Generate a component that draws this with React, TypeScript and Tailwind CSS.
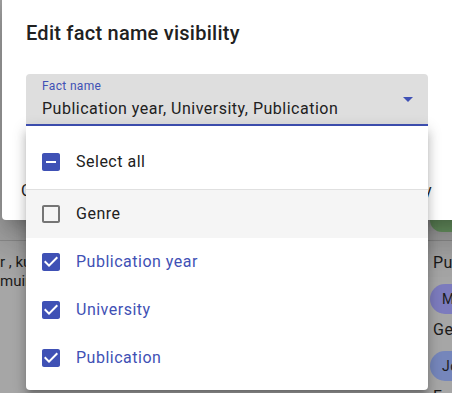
import React from "react";

const BOX_CHECKED =
  "M19 3H5c-1.11 0-2 .9-2 2v14c0 1.1.89 2 2 2h14c1.11 0 2-.9 2-2V5c0-1.1-.89-2-2-2zm-9 14l-5-5 1.41-1.41L10 14.17l7.59-7.59L19 8l-9 9z";
const BOX_BLANK =
  "M19 5v14H5V5h14m0-2H5c-1.1 0-2 .9-2 2v14c0 1.1.9 2 2 2h14c1.1 0 2-.9 2-2V5c0-1.1-.9-2-2-2z";
const BOX_PARTIAL =
  "M19 3H5c-1.1 0-2 .9-2 2v14c0 1.1.9 2 2 2h14c1.1 0 2-.9 2-2V5c0-1.1-.9-2-2-2zm-2 10H7v-2h10v2z";

type BoxState = "checked" | "blank" | "partial";

const CheckIcon = ({ state }: { state: BoxState }) => {
  const d = state === "checked" ? BOX_CHECKED : state === "blank" ? BOX_BLANK : BOX_PARTIAL;
  return (
    <svg
      viewBox="0 0 24 24"
      className={state === "blank" ? "w-6 h-6 fill-[#757575]" : "w-6 h-6 fill-[#3f51b5]"}
    >
      {state !== "blank" && <rect x="5" y="5" width="14" height="14" fill="#ffffff" />}
      <path d={d} />
    </svg>
  );
};

const options: { label: string; state: BoxState; hover?: boolean }[] = [
  { label: "Genre", state: "blank", hover: true },
  { label: "Publication year", state: "checked" },
  { label: "University", state: "checked" },
  { label: "Publication", state: "checked" },
];

export default function App() {
  return (
    <div className="relative w-[452px] h-[393px] overflow-hidden bg-[#a6a6a6] font-['Roboto','Liberation_Sans',sans-serif]">
      {/* page behind the backdrop */}
      <div className="flex flex-col">
        <div className="h-[241px] border-b border-[#8e8e8e] flex items-end justify-end pb-[8px]">
          <div className="w-[40px] h-[24px] rounded-full bg-[#6d9a66] -mr-[18px]" />
        </div>
        <div className="flex justify-between">
          <div className="pt-[12px] text-[15px] leading-[19px] text-[#1b1b1b] whitespace-nowrap">
            <p>r , kuusi</p>
            <p>muinen</p>
          </div>
          <div className="w-[22px] pt-[10px] whitespace-nowrap text-[16px] leading-6 tracking-[0.5px] text-[#1b1b1b]">
            <p className="pl-[3px]">Publication year</p>
            <div className="mt-[9px] h-[30px] w-fit rounded-full bg-[#7c7bbd] px-3 flex items-center text-[14px]">
              Mikko
            </div>
            <p className="mt-[4px] pl-[3px]">Genre</p>
            <div className="mt-[9px] h-[30px] w-fit rounded-full bg-[#7586bb] px-3 flex items-center text-[14px]">
              Jokin
            </div>
            <p className="mt-[4px] pl-[3px]">Faculty</p>
          </div>
        </div>
      </div>

      {/* dialog */}
      <div className="absolute left-[2px] top-[-8px] w-[480px] h-[228px] bg-white rounded-[4px] shadow-[0_11px_15px_-7px_rgba(0,0,0,0.2),0_24px_38px_3px_rgba(0,0,0,0.14),0_9px_46px_8px_rgba(0,0,0,0.12)] pt-[25px] pl-[24px] flex flex-col">
        <h2 className="h-8 leading-8 text-[20px] font-medium tracking-[0.25px] text-[#212121]">
          Edit fact name visibility
        </h2>
        <div className="mt-[25px] w-[402px] h-[52px] bg-[#dedede] rounded-t-[4px] border-b-2 border-[#3f51b5] flex items-center pl-4 pr-2">
          <div className="flex-1 flex flex-col self-start pt-[4px]">
            <span className="text-[12px] leading-4 tracking-[0.35px] text-[#3f51b5]">Fact name</span>
            <span className="mt-[3px] text-[16px] leading-6 tracking-[0.5px] text-[#212121]">
              Publication year, University, Publication
            </span>
          </div>
          <svg viewBox="0 0 24 24" className="w-6 h-6 fill-[#3f51b5]">
            <path d="M7 10l5 5 5-5z" />
          </svg>
        </div>
        <div className="mt-[53px] -ml-[5px] w-[411px] flex justify-between text-[16px] leading-6 tracking-[0.5px] text-[#212121]">
          <span>Cancel</span>
          <span>Apply</span>
        </div>
      </div>

      {/* select menu */}
      <div className="absolute left-[26px] top-[126px] w-[402px] bg-white rounded-b-[4px] shadow-[0_5px_5px_-3px_rgba(0,0,0,0.2),0_8px_10px_1px_rgba(0,0,0,0.14),0_3px_14px_2px_rgba(0,0,0,0.12)] pt-[9px] pb-[8px]">
        <div className="h-[55px] border-b border-[#e0e0e0] flex items-center pl-[13px]">
          <CheckIcon state="partial" />
          <span className="ml-[13px] text-[16px] tracking-[0.5px] text-[#212121]">Select all</span>
        </div>
        {options.map((o) => (
          <div
            key={o.label}
            className={
              o.hover
                ? "h-12 flex items-center pl-[13px] bg-[#f5f5f5]"
                : "h-12 flex items-center pl-[13px]"
            }
          >
            <CheckIcon state={o.state} />
            <span
              className={
                o.state === "checked"
                  ? "ml-[13px] text-[16px] tracking-[0.5px] text-[#3f51b5]"
                  : "ml-[13px] text-[16px] tracking-[0.5px] text-[#212121]"
              }
            >
              {o.label}
            </span>
          </div>
        ))}
      </div>
    </div>
  );
}
